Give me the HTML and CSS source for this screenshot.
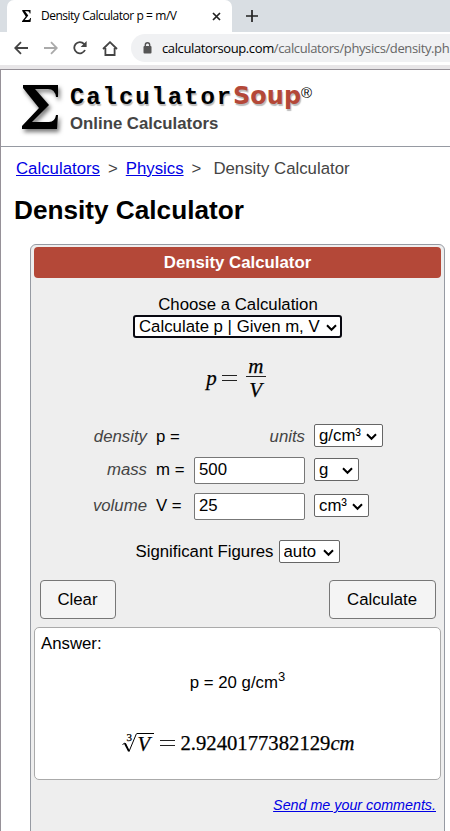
FILE: index.html
```html
<!DOCTYPE html>
<html lang="en">
<head>
  <meta charset="UTF-8">
  <meta name="viewport" content="width=device-width, initial-scale=1.0">
  <title>Density Calculator p = m/V</title>
  <link rel="stylesheet" href="styles.css">
</head>
<body>
  <!-- Browser tabs and toolbar -->
  <div class="tabs">
    <div class="tab">
      <svg class="tab-icon" width="11" height="12" viewBox="0 0 36 48"><path d="M1 0H34V14H31Q30 5 22 5H12L25 22L11 40H24Q32 40 33 32H36L34 48H0V45L15 26L1 4Z"/></svg>
      <span class="tab-title">Density Calculator p = m/V</span>
      <svg class="tab-close" width="9" height="9" viewBox="0 0 9 9"><path d="M1 1l7 7M8 1l-7 7"/></svg>
    </div>
    <svg class="new-tab" width="12" height="12" viewBox="0 0 12 12"><path d="M6 0v12M0 6h12"/></svg>
  </div>
  <div class="toolbar">
    <svg class="nav-icon" width="14" height="14" viewBox="0 0 14 14"><path d="M14 7H1.5M7 1.2L1.2 7L7 12.8"/></svg>
    <svg class="nav-icon faded" width="14" height="14" viewBox="0 0 14 14"><path d="M0 7h12.5M7 1.2L12.8 7L7 12.8"/></svg>
    <svg class="nav-icon" width="14" height="14" viewBox="0 0 14 14"><path d="M12 9a5.6 5.6 0 1 1-1-6.1l1.3 1.4"/><path class="fill" d="M13.6 0v6H7.6Z"/></svg>
    <svg class="nav-icon" width="16" height="15" viewBox="0 0 16 15"><path d="M1 8L8 1.2L15 8M3.4 7v7h9.2V7"/></svg>
    <div class="address">
      <svg width="9" height="12" viewBox="0 0 9 12"><rect x="0.5" y="4" width="8" height="7.5" rx="1"/><path d="M2.3 5V3a2.2 2.2 0 0 1 4.4 0v2"/></svg>
      <span class="url">calculatorsoup.com<span class="path">/calculators/physics/density.ph</span></span>
    </div>
  </div>

  <div class="page">
    <header>
      <svg class="logo" width="45" height="54" viewBox="0 0 45 54"><path d="M2 1H37V13H35Q34 5 27 5H14L28 21L11 38H28Q34 38 35 31H37L36 45H1V42L18 24L2 4Z"/></svg>
      <div class="brand">
        <div class="brand-name">Calculator<span class="soup">Soup</span><span class="reg">®</span></div>
        <div class="tagline">Online Calculators</div>
      </div>
    </header>

    <nav class="breadcrumb">
      <a href="#">Calculators</a><span class="sep">&gt;</span><a href="#">Physics</a><span class="sep">&gt;</span><span class="current">Density Calculator</span>
    </nav>
    <h1>Density Calculator</h1>

    <form class="calculator">
      <h2>Density Calculator</h2>
      <label class="choose" for="solve">Choose a Calculation</label>
      <select id="solve" class="solve"><option>Calculate p | Given m, V</option></select>

      <div class="formula">
        <i>p</i><span class="eq"></span>
        <span class="fraction"><i>m</i><i class="denominator">V</i></span>
      </div>

      <div class="fields">
        <div class="row">
          <em>density</em><label>p =</label><em class="units">units</em>
          <select class="unit-density"><option>g/cm³</option></select>
        </div>
        <div class="row">
          <em>mass</em><label for="m">m =</label><input id="m" type="text" value="500">
          <select class="unit-mass"><option>g</option></select>
        </div>
        <div class="row">
          <em>volume</em><label for="v">V =</label><input id="v" type="text" value="25">
          <select class="unit-volume"><option>cm³</option></select>
        </div>
      </div>

      <div class="sigfig">
        <label for="sf">Significant Figures</label>
        <select id="sf"><option>auto</option></select>
      </div>

      <div class="buttons">
        <button type="button" class="clear">Clear</button>
        <button type="button" class="calculate">Calculate</button>
      </div>

      <div class="answer">
        <div>Answer:</div>
        <div class="result">p = 20 g/cm<sup>3</sup></div>
        <div class="root">
          <span class="radical">
            <span class="index">3</span>
            <svg width="15" height="20" viewBox="0 0 15 20"><path d="M0.5 11.5L3 10L7 18.5L14.5 0.5"/><path class="thick" d="M3 10.5L6.8 18"/></svg>
            <i class="radicand">V</i>
          </span>
          <span class="eq"></span>
          <span class="value">2.9240177382129<i>cm</i></span>
        </div>
      </div>
      <a class="comments" href="#">Send me your comments.</a>
    </form>
  </div>
</body>
</html>
```

FILE: styles.css
```css
* {
  box-sizing: border-box;
}

body {
  margin: 0;
  height: 831px;
  overflow: hidden;
  background: #fff;
  color: #000;
  font-family: "Liberation Sans", Arial, sans-serif;
  font-size: 16.8px;
  line-height: 20px;
  display: flex;
  flex-direction: column;
}

/* Browser tabs */
.tabs {
  flex: none;
  height: 32px;
  background: #d9dee3;
  display: flex;
  align-items: center;
}

.tab {
  width: 225px;
  height: 32px;
  margin-left: 7px;
  padding-left: 14px;
  background: #fff;
  border-radius: 7px 7px 0 0;
  display: flex;
  align-items: center;
}

.tab-title {
  width: 175px;
  margin-left: 9px;
  font: 12px/16px "Open Sans", sans-serif;
  letter-spacing: -0.5px;
  word-spacing: 0.2px;
  white-space: nowrap;
}

.tab-close, .new-tab {
  flex: none;
  fill: none;
  stroke: #222;
  stroke-width: 1.7;
}

.tab-close {
  margin-left: -4px;
}

.new-tab {
  margin-left: 14px;
}

/* Browser toolbar */
.toolbar {
  flex: none;
  height: 37px;
  padding: 0 0 1px 14px;
  display: flex;
  align-items: center;
  gap: 16px;
  border-bottom: 4px solid #e8e6e8;
}

.nav-icon {
  flex: none;
  fill: none;
  stroke: #444;
  stroke-width: 1.8;
}

.nav-icon:nth-child(n+3) {
  margin-left: -1px;
}

.nav-icon .fill {
  fill: #444;
  stroke: none;
}

.faded {
  stroke: #aaa;
}

.address {
  flex: 1;
  height: 28px;
  margin-left: -3px;
  padding-left: 12px;
  border-radius: 14px 0 0 14px;
  background: #f0f1f3;
  display: flex;
  align-items: center;
}

.address svg {
  flex: none;
  fill: #555;
}

.address path {
  fill: none;
  stroke: #555;
  stroke-width: 1.4;
}

.url {
  margin-left: 10px;
  font: 13px/18px "Open Sans", sans-serif;
  letter-spacing: -0.38px;
  white-space: nowrap;
}

.path {
  color: #666;
}

/* Site header */
.page {
  flex: 1;
  border: solid #969198;
  border-width: 1px 0 0 1px;
}

header {
  height: 77px;
  padding: 14px 0 0 20px;
  border-bottom: 1px solid #969aa2;
  display: flex;
}

.logo {
  flex: none;
  filter: drop-shadow(2px 3px 2px #777);
}

.brand {
  margin-left: 4px;
}

.brand-name {
  height: 30px;
  font: bold 24px/25px "Liberation Mono", "Courier New", monospace;
  letter-spacing: 1.9px;
  text-shadow: 1px 2px 1px #bbb;
  white-space: nowrap;
}

.soup {
  color: #b44838;
  font: bold 24px/25px "DejaVu Sans", Verdana, sans-serif;
  letter-spacing: 0;
}

.reg {
  font: 15px/13px "Liberation Sans", Arial, sans-serif;
  letter-spacing: 0;
  vertical-align: 6px;
  text-shadow: none;
}

.tagline {
  color: #444;
  font-size: 16.8px;
  font-weight: bold;
}

.breadcrumb {
  padding: 12px 0 0 15px;
  color: #444;
  font-size: 16.8px;
  white-space: nowrap;
}

.breadcrumb a {
  color: #0000e4;
}

.sep {
  margin: 0 8px;
}

.sep + .current {
  margin-left: 4px;
}

h1 {
  margin: 16px 0 0 13px;
  font-size: 26.2px;
  line-height: 30px;
}

/* Calculator box */
.calculator {
  width: 415px;
  height: 620px;
  margin: 19px 0 0 29px;
  padding: 2px 3px;
  border: 1px solid #969aa2;
  border-radius: 6px;
  background: #eee;
  display: flex;
  flex-direction: column;
  align-items: center;
}

h2 {
  width: 407px;
  height: 31px;
  margin: 0 0 17px;
  border-radius: 4px;
  background: #b44838;
  color: #fff;
  font-size: 16.8px;
  line-height: 31px;
  text-align: center;
}

.choose {
  margin-left: 1px;
}

select {
  appearance: none;
  height: 23px;
  padding: 0 0 0 4px;
  border: 1px solid #666;
  border-radius: 2px;
  background: #fff url("data:image/svg+xml,%3Csvg xmlns='http://www.w3.org/2000/svg' width='11' height='8'%3E%3Cpath d='M1 1.3l4.5 4.5L10 1.3' fill='none' stroke='black' stroke-width='2'/%3E%3C/svg%3E") no-repeat right 5px top 8px;
  color: #000;
  font: 16.8px "Liberation Sans", Arial, sans-serif;
}

.solve {
  width: 209px;
  margin: 0;
  padding-left: 4px;
  border: 2px solid #080810;
  border-radius: 3px;
  background-position: right 3px top 7px;
}

.formula, .root {
  font-family: "Liberation Serif", "Times New Roman", serif;
  font-size: 21px;
  -webkit-text-stroke: 0.25px #000;
}

.formula {
  height: 48px;
  margin: 16px 0 0 -3px;
  display: flex;
  align-items: center;
}

.eq {
  width: 15px;
  height: 6px;
  margin: 0 9px 0 5px;
  border: solid #222;
  border-width: 1px 0;
}

.fraction {
  width: 20px;
  display: flex;
  flex-direction: column;
  align-items: center;
}

.denominator {
  width: 20px;
  padding-top: 3px;
  border-top: 1px solid #222;
  text-align: center;
}

.fields {
  width: 407px;
  margin-top: 20px;
  display: grid;
  gap: 8px;
}

.row {
  height: 28px;
  display: grid;
  grid-template-columns: 113px 29px 111px auto;
  column-gap: 9px;
  align-items: center;
  justify-items: start;
}

.row:first-child {
  height: 26px;
}

.row:first-child em, .row:first-child label {
  padding-top: 3px;
}

.row em {
  color: #444;
  justify-self: end;
}

.row label {
  white-space: nowrap;
}

input {
  width: 111px;
  height: 27px;
  padding: 0 4px;
  border: 1px solid #777;
  border-radius: 2px;
  font: 16.8px "Liberation Sans", Arial, sans-serif;
}

.unit-density {
  width: 69px;
}

.unit-mass {
  width: 45px;
  margin-bottom: 2px;
}

.unit-volume {
  width: 55px;
  margin-bottom: 2px;
}

.sigfig {
  margin-top: 20px;
  display: flex;
  align-items: center;
  gap: 5px;
}

.sigfig select {
  width: 61px;
}

.buttons {
  width: 396px;
  margin-top: 17px;
  display: flex;
  justify-content: space-between;
}

button {
  height: 39px;
  border: 1px solid #777;
  border-radius: 4px;
  background: #f4f4f4;
  color: #000;
  font: 16.8px "Liberation Sans", Arial, sans-serif;
}

.clear {
  width: 76px;
}

.calculate {
  width: 107px;
}

.answer {
  width: 407px;
  height: 153px;
  margin-top: 8px;
  padding: 6px 6px;
  border: 1px solid #aaa;
  border-radius: 5px;
  background: #fff;
}

.result {
  margin-top: 19px;
  text-align: center;
}

sup {
  font-size: 13px;
  line-height: 0;
}

.root {
  height: 24px;
  margin: 38px 0 0 2px;
  font-size: 20.7px;
  display: flex;
  align-items: center;
  justify-content: center;
}

.root .eq {
  margin: 0 5px 0 6px;
}

.radical {
  position: relative;
  display: flex;
}

.radical svg {
  fill: none;
  stroke: #000;
  stroke-width: 1;
}

.radical .thick {
  stroke-width: 1.8;
}

.index {
  position: absolute;
  left: 4px;
  top: -1px;
  font-size: 11px;
  line-height: 10px;
}

.radicand {
  width: 17px;
  height: 20px;
  border-top: 1px solid #000;
}

.comments {
  margin: 15px 5px 0 0;
  align-self: flex-end;
  color: #0000e4;
  font-size: 14.3px;
  font-style: italic;
}
```
